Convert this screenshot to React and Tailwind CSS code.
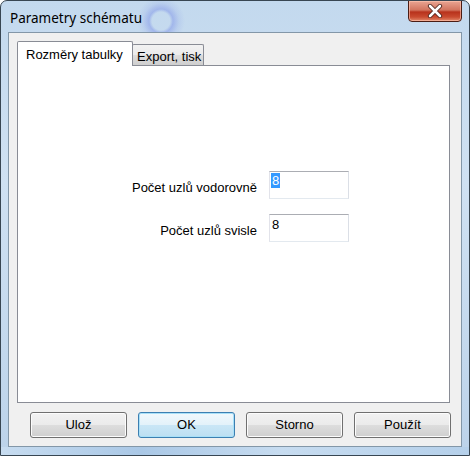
import React from "react";

const btn =
  "w-[97px] h-[26px] rounded-[3px] border flex items-center justify-center text-[13px] text-black";

function Button({ children, def }) {
  return (
    <div
      className={
        btn +
        (def
          ? " border-[#3c7fb1] shadow-[inset_0_0_0_1px_#a8e0f8] bg-[linear-gradient(#f1f8fc_0%,#e3f2fa_48%,#c9e6f6_52%,#bcdff2_100%)]"
          : " border-[#707070] shadow-[inset_0_0_0_1px_#fcfcfc] bg-[linear-gradient(#f2f2f2_0%,#ebebeb_48%,#dddddd_52%,#cfcfcf_100%)]")
      }
      style={{ fontFamily: '"Liberation Sans", Arial, sans-serif' }}
    >
      {children}
    </div>
  );
}

export default function App() {
  return (
    <div
      className="w-[470px] h-[456px] overflow-hidden rounded-t-[7px] border border-[#384652] bg-[linear-gradient(180deg,#c3d9ee_0%,#cfe1f2_40%,#bcd3ea_100%)] flex flex-col"
      style={{ fontFamily: '"Liberation Sans", Arial, sans-serif' }}
    >
      {/* Title bar */}
      <div className="h-[31px] flex items-start justify-between bg-[radial-gradient(circle_at_160px_20px,rgba(255,255,255,0)_0,rgba(255,255,255,0)_9px,rgba(110,130,230,0.4)_12px,rgba(110,130,230,0.12)_18px,transparent_24px)]">
        <div
          className="ml-[9px] mt-[8px] text-[13.5px] leading-[18px] text-black"
          style={{ fontFamily: '"Noto Sans", "Open Sans", sans-serif' }}
        >
          Parametry schématu
        </div>
        <div className="mr-[7px] mt-[-1px] w-[54px] h-[22px] rounded-b-[4px] border border-[#4a1c14] shadow-[inset_0_0_0_1px_rgba(255,200,180,0.6)] bg-[linear-gradient(180deg,#e9a593_0%,#d2755f_45%,#b8321c_55%,#c94b30_80%,#e38a6c_100%)] flex items-center justify-center">
          <svg width="16" height="14" viewBox="0 0 16 14">
            <path
              d="M3 2 L13 12 M13 2 L3 12"
              stroke="#4a2018"
              strokeWidth="4.2"
              strokeLinecap="round"
            />
            <path
              d="M3 2 L13 12 M13 2 L3 12"
              stroke="#ffffff"
              strokeWidth="2.6"
              strokeLinecap="round"
            />
          </svg>
        </div>
      </div>

      {/* Client area */}
      <div className="mx-[7px] h-[415px] border border-[#8397a8] bg-[#f0f0f0] flex flex-col pt-[8px] pl-[8px] pr-[11px]">
        {/* Tabs */}
        <div className="flex items-end h-[25px] relative z-10">
          <div className="h-[25px] w-[116px] border border-b-0 border-[#898c95] bg-white rounded-t-[2px] flex items-start pl-[8px] pt-[5px] text-[13px] leading-[15px] text-black">
            Rozměry tabulky
          </div>
          <div className="h-[21px] w-[72px] -ml-px border border-b-0 border-[#898c95] rounded-t-[2px] bg-[linear-gradient(#f2f2f2_0%,#ebebeb_48%,#dddddd_52%,#cfcfcf_100%)] flex items-start pl-[4px] pt-[4px] text-[13px] leading-[15px] text-black mb-px">
            Export, tisk
          </div>
        </div>
        {/* Panel */}
        <div className="-mt-px h-[338px] border border-[#898c95] bg-white flex flex-col pt-[105px] pl-[112px]">
          <div className="grid grid-cols-[127px_80px] gap-x-[12px] gap-y-[15px] items-start">
            <div className="text-right text-[13px] leading-[15px] text-black pt-[9px]">
              Počet uzlů vodorovně
            </div>
            <div className="h-[28px] border border-[#abadb3] border-l-[#e2e3ea] border-r-[#dbdfe6] border-b-[#e3e9ef] bg-white pl-[1px] pt-[1px] text-[13px] leading-[15px]">
              <span className="bg-[#3399ff] text-white px-px">8</span>
            </div>
            <div className="text-right text-[13px] leading-[15px] text-black pt-[9px]">
              Počet uzlů svisle
            </div>
            <div className="h-[28px] border border-[#abadb3] border-l-[#e2e3ea] border-r-[#dbdfe6] border-b-[#e3e9ef] bg-white pl-[2px] pt-[2px] text-[13px] leading-[15px] text-black">
              8
            </div>
          </div>
        </div>
        {/* Buttons */}
        <div className="mt-[9px] flex justify-end gap-[11px] -mr-px">
          <Button>Ulož</Button>
          <Button def>OK</Button>
          <Button>Storno</Button>
          <Button>Použít</Button>
        </div>
      </div>
      <div className="flex-1 bg-[linear-gradient(90deg,#c7dcf0,#aac8e6_30%,#c7dcf0_60%,#b5d0ea)]"></div>
    </div>
  );
}
